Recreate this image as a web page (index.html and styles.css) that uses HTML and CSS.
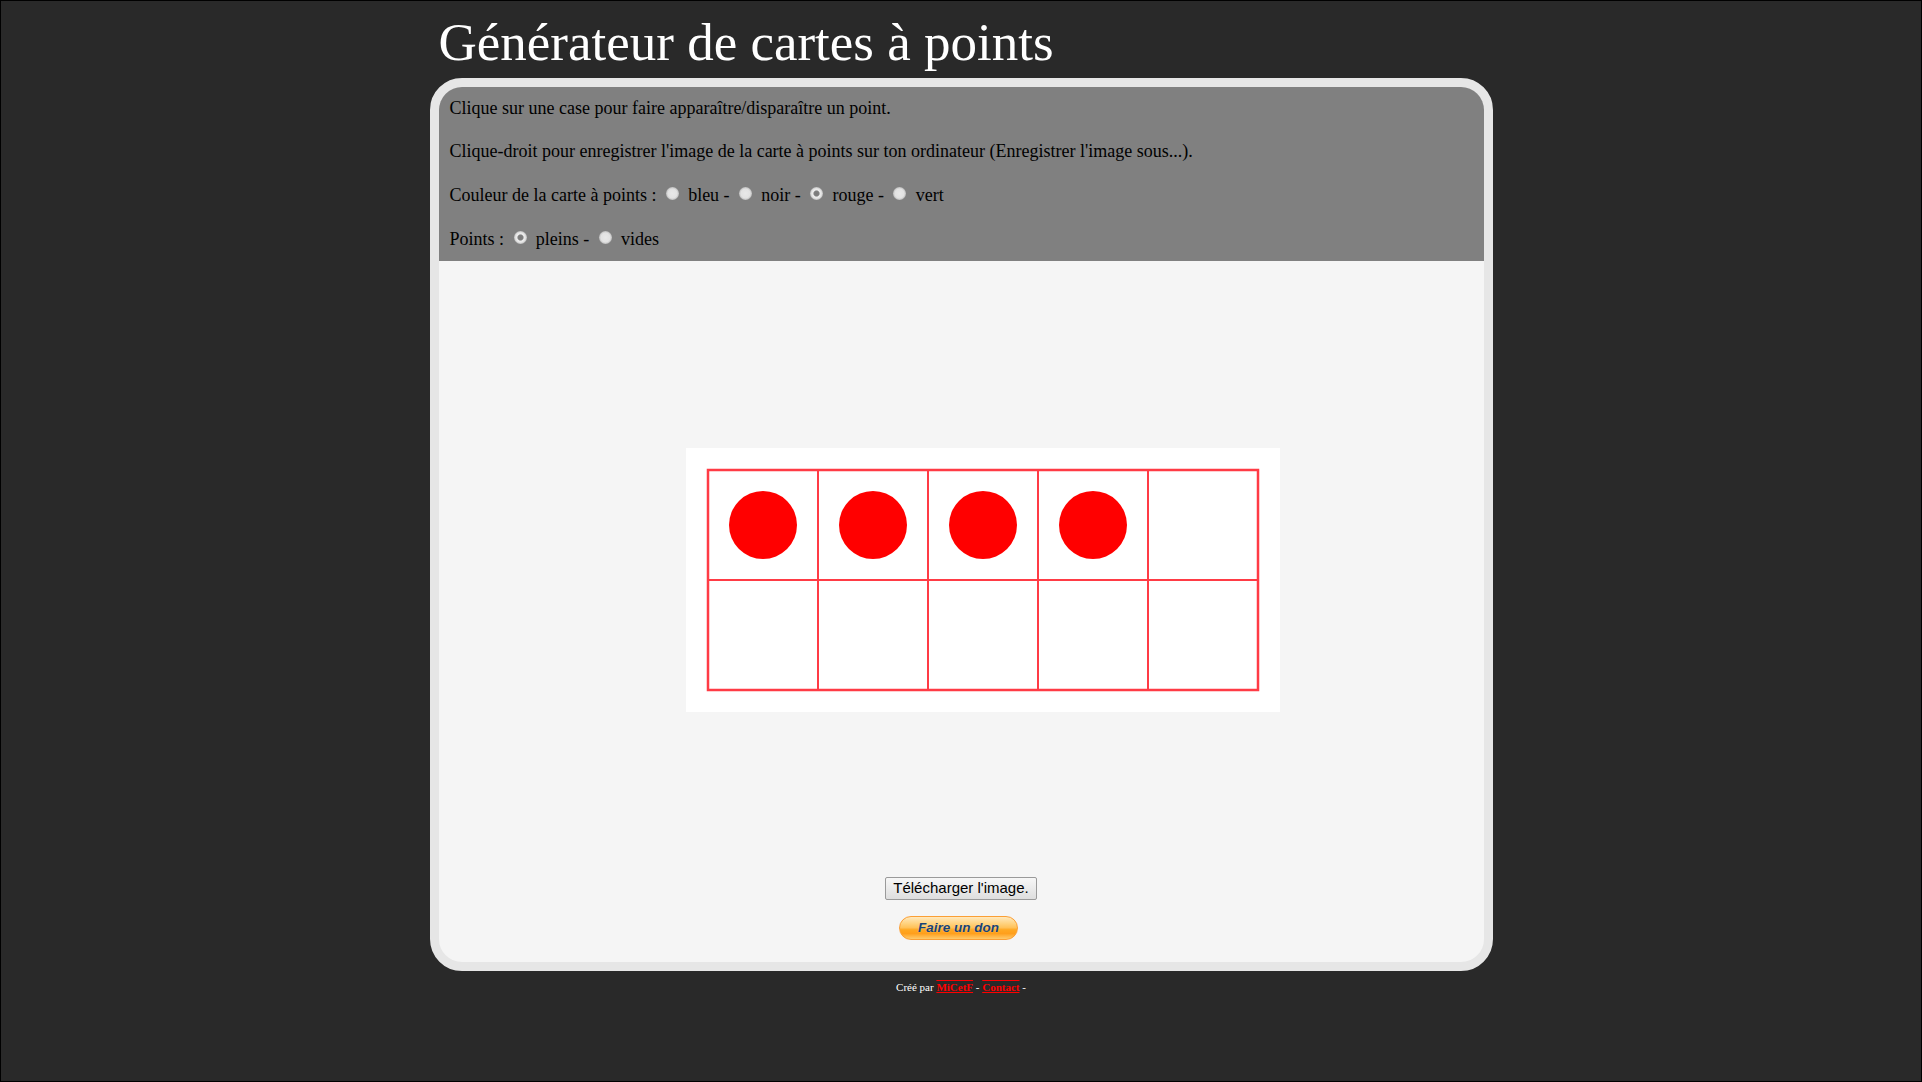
FILE: index.html
```html
<!DOCTYPE html>
<html lang="fr">
<head>
    <meta charset="UTF-8">
    <title>Générateur de cartes à points</title>
    <link rel="stylesheet" href="styles.css">
</head>
<body>

    <div id="page">
        <h1>Générateur de cartes à points</h1>

        <div id="cadre">
            <!-- Consignes et options -->
            <div id="options">
                <p>Clique sur une case pour faire apparaître/disparaître un point.</p>
                <p>Clique-droit pour enregistrer l'image de la carte à points sur ton ordinateur (Enregistrer l'image sous...).</p>
                <p>
                    Couleur de la carte à points :
                    <input type="radio" name="couleur"> bleu -
                    <input type="radio" name="couleur"> noir -
                    <input type="radio" name="couleur" checked> rouge -
                    <input type="radio" name="couleur"> vert
                </p>
                <p>
                    Points :
                    <input type="radio" name="points" checked> pleins -
                    <input type="radio" name="points"> vides
                </p>
            </div>

            <!-- La carte -->
            <div id="zone-carte">
                <svg id="carte" width="594" height="264" viewBox="0 0 594 264">
                    <rect width="594" height="264" fill="#fff"/>
                    <g stroke="#ff3b45" fill="none">
                        <rect x="22" y="22" width="550" height="220" stroke-width="2.5"/>
                        <path stroke-width="2" d="M132 22V242M242 22V242M352 22V242M462 22V242M22 132H572"/>
                    </g>
                    <g fill="#f00">
                        <circle cx="77" cy="77" r="34"/>
                        <circle cx="187" cy="77" r="34"/>
                        <circle cx="297" cy="77" r="34"/>
                        <circle cx="407" cy="77" r="34"/>
                    </g>
                </svg>
            </div>

            <div id="actions">
                <button id="telecharger">Télécharger l'image.</button>
                <button id="don">Faire un don</button>
            </div>
        </div>

        <div id="pied">
            Créé par <a href="#">MiCetF</a> - <a href="#">Contact</a> -
        </div>
    </div>

</body>
</html>
```

FILE: styles.css
```css
html, body {
    height: 100%;
}

body {
    margin: 0;
    box-sizing: border-box;
    border: 1px solid #000;
    background-color: #292929;
    font-family: "Liberation Serif", "Times New Roman", serif;
    color: #000;
    overflow: hidden;
}

#page {
    width: 1063px;
    margin: 0 auto;
}

h1 {
    margin: 0;
    padding: 12px 0 0 9px;
    height: 64px;
    box-sizing: border-box;
    font-size: 53px;
    line-height: 59px;
    font-weight: normal;
    white-space: nowrap;
    color: #fff;
}

#cadre {
    margin-top: 13px;
    height: 893px;
    box-sizing: border-box;
    border: 9px solid #e6e6e6;
    border-radius: 32px;
    background-color: #f5f5f5;
    overflow: hidden;
}

#options {
    height: 174px;
    box-sizing: border-box;
    padding: 11px 10px 0 11px;
    background-color: #808080;
    font-size: 18px;
}

#options p {
    margin: 0 0 23px;
    line-height: 21px;
}

#options p:first-child {
    margin-bottom: 22px;
}

#options input {
    appearance: none;
    width: 13px;
    height: 13px;
    margin: 2px 4.7px 0 5px;
    vertical-align: top;
    border-radius: 50%;
    background: radial-gradient(circle, #e8e8e8 0, #e2e2e2 4.5px, #bdbdbd 6.5px);
}

#options input:checked {
    background: radial-gradient(circle, #7a7a7a 0, #808080 2.5px, #ececec 3.6px, #e6e6e6 4.8px, #bdbdbd 6.5px);
}

#zone-carte {
    display: flex;
    justify-content: center;
    padding: 187px 0 0 44px;
}

#actions {
    display: flex;
    flex-direction: column;
    align-items: center;
    margin-top: 165px;
}

#telecharger {
    height: 23px;
    padding: 0 7px 2px;
    border: 1px solid #9a9a9a;
    border-radius: 2px;
    background: linear-gradient(#f7f7f7, #dedede);
    font-family: "Liberation Sans", Arial, sans-serif;
    font-size: 15px;
    color: #000;
}

#don {
    width: 119px;
    height: 24px;
    margin: 16px 5px 0 0;
    padding: 0 0 2px;
    border: 1px solid #fb9f35;
    border-radius: 12px;
    background: linear-gradient(#ffe9bd 0%, #ffd27e 30%, #ffc25a 48%, #ffa822 58%, #ff9f1c 75%, #ffca6b 100%);
    font-family: "Liberation Sans", Arial, sans-serif;
    font-size: 13.5px;
    font-weight: bold;
    font-style: italic;
    color: #1a4273;
    text-shadow: 0 0 1px #ffe0a0;
}

#pied {
    margin-top: 10px;
    text-align: center;
    font-size: 11px;
    color: #fff;
}

#pied a {
    color: #f00;
    font-weight: bold;
    text-decoration: underline overline;
}
```
